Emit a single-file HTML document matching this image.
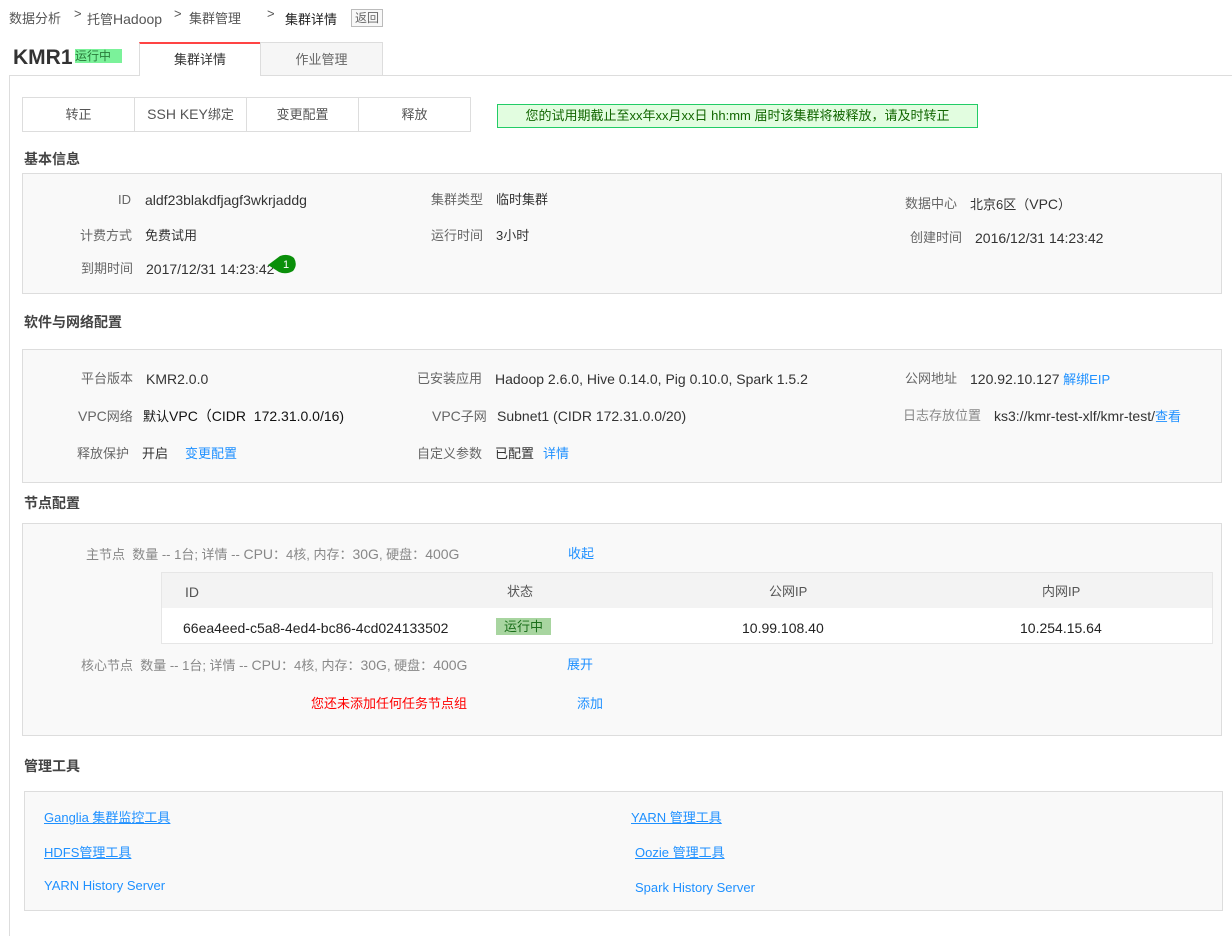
<!DOCTYPE html>
<html><head><meta charset="utf-8"><style>
body{margin:0;width:1232px;height:921px;position:relative;background:#fff;font-family:"Liberation Sans","Noto Sans CJK SC",sans-serif;font-size:13px;color:#333;overflow:hidden}
.a{position:absolute;white-space:nowrap;line-height:16px}
.g{color:#666}.l{color:#666}.b{color:#1e90ff}
.n{font-size:14px}
.p{position:absolute;background:#f9f9f9;border:1px solid #ddd;box-sizing:border-box}
.h{position:absolute;font-size:14px;font-weight:bold;color:#444;line-height:16px}
.btn{position:absolute;top:97px;height:35px;border:1px solid #ddd;box-sizing:border-box;text-align:center;line-height:33px;color:#555;background:#fff}
u{text-decoration:underline}
</style></head><body>
<div class="a" style="left:9px;top:11px;color:#555">数据分析</div>
<div class="a" style="left:74px;top:6px;color:#555">&gt;</div>
<div class="a" style="left:87px;top:11px;color:#555">托管<span class="n">Hadoop</span></div>
<div class="a" style="left:174px;top:6px;color:#555">&gt;</div>
<div class="a" style="left:189px;top:11px;color:#555">集群管理</div>
<div class="a" style="left:267px;top:6px;color:#555">&gt;</div>
<div class="a" style="left:285px;top:12px;color:#222">集群详情</div>
<div class="a" style="left:351px;top:9px;border:1px solid #bbb;font-size:12px;padding:0 3px;color:#666;line-height:16px;background:#f8f8f8">返回</div>

<div class="a" style="left:13px;top:47px;font-size:21px;font-weight:bold;line-height:22px;color:#333">KMR1</div>
<div class="a" style="left:75px;top:49px;background:#7bf29a;width:47px;height:14px;line-height:14px;font-size:12px;color:#2a7a3a">运行中</div>

<div style="position:absolute;left:9px;top:75px;width:1230px;height:860px;border-left:1px solid #ddd;border-top:1px solid #ddd"></div>
<div style="position:absolute;left:139px;top:42px;width:122px;height:34px;background:#fff;border-top:2px solid #f44;border-left:1px solid #ddd;border-right:1px solid #ddd;box-sizing:border-box;text-align:center;line-height:32px;color:#333">集群详情</div>
<div style="position:absolute;left:260px;top:42px;width:123px;height:33px;background:#f6f6f6;border:1px solid #ddd;border-bottom:none;box-sizing:border-box;text-align:center;line-height:33px;color:#666">作业管理</div>

<div class="btn" style="left:22px;width:113px">转正</div>
<div class="btn" style="left:134px;width:113px"><span class="n">SSH KEY</span>绑定</div>
<div class="btn" style="left:246px;width:113px">变更配置</div>
<div class="btn" style="left:358px;width:113px">释放</div>
<div class="a" style="left:497px;top:104px;width:481px;height:24px;box-sizing:border-box;border:1px solid #2c6;background:#e2fde0;color:#160;text-align:center;line-height:22px">您的试用期截止至xx年xx月xx日 hh:mm 届时该集群将被释放，请及时转正</div>

<div class="h" style="left:24px;top:151px">基本信息</div>
<div class="p" style="left:22px;top:173px;width:1200px;height:121px"></div>
<div class="a l" style="left:118px;top:192px">ID</div><div class="a n" style="left:145px;top:192px">aldf23blakdfjagf3wkrjaddg</div>
<div class="a l" style="left:431px;top:192px">集群类型</div><div class="a" style="left:496px;top:192px">临时集群</div>
<div class="a l" style="left:905px;top:196px">数据中心</div><div class="a" style="left:970px;top:196px">北京6区（<span class="n">VPC</span>）</div>
<div class="a l" style="left:80px;top:228px">计费方式</div><div class="a" style="left:145px;top:228px">免费试用</div>
<div class="a l" style="left:431px;top:228px">运行时间</div><div class="a" style="left:496px;top:228px">3小时</div>
<div class="a l" style="left:910px;top:230px">创建时间</div><div class="a n" style="left:975px;top:230px">2016/12/31 14:23:42</div>
<div class="a l" style="left:81px;top:261px">到期时间</div><div class="a n" style="left:146px;top:261px">2017/12/31 14:23:42</div>
<svg style="position:absolute;left:266px;top:253px" width="32" height="22"><path d="M2 12 L14 3 Q22 0 28 5 Q32 12 27 18 Q20 22 13 19 Z" fill="#0a8f0a"/><text x="20" y="15" font-size="11" fill="#fff" text-anchor="middle" font-family="Liberation Sans">1</text></svg>

<div class="h" style="left:24px;top:314px">软件与网络配置</div>
<div class="p" style="left:22px;top:349px;width:1200px;height:134px"></div>
<div class="a l" style="left:81px;top:371px">平台版本</div><div class="a n" style="left:146px;top:371px">KMR2.0.0</div>
<div class="a l" style="left:417px;top:371px">已安装应用</div><div class="a n" style="left:495px;top:371px">Hadoop 2.6.0, Hive 0.14.0, Pig 0.10.0, Spark 1.5.2</div>
<div class="a l" style="left:905px;top:371px">公网地址</div><div class="a" style="left:970px;top:371px"><span class="n">120.92.10.127</span> <span class="b">解绑EIP</span></div>
<div class="a l" style="left:78px;top:408px"><span class="n">VPC</span>网络</div><div class="a" style="left:143px;top:408px;color:#111">默认<span class="n">VPC（CIDR &nbsp;172.31.0.0/16)</span></div>
<div class="a l" style="left:432px;top:408px"><span class="n">VPC</span>子网</div><div class="a n" style="left:497px;top:408px">Subnet1 (CIDR 172.31.0.0/20)</div>
<div class="a" style="left:903px;top:408px;color:#888">日志存放位置</div><div class="a" style="left:994px;top:408px"><span class="n">ks3://kmr-test-xlf/kmr-test/</span><span class="b">查看</span></div>
<div class="a l" style="left:77px;top:446px">释放保护</div><div class="a" style="left:142px;top:446px">开启</div><div class="a b" style="left:185px;top:446px">变更配置</div>
<div class="a l" style="left:417px;top:446px">自定义参数</div><div class="a" style="left:495px;top:446px">已配置</div><div class="a b" style="left:543px;top:446px">详情</div>

<div class="h" style="left:24px;top:495px">节点配置</div>
<div class="p" style="left:22px;top:523px;width:1200px;height:213px"></div>
<div class="a" style="left:86px;top:546px;color:#888">主节点 &nbsp;数量 -- 1台; 详情 -- <span class="n">CPU</span>：4核, 内存：<span class="n">30G</span>, 硬盘：<span class="n">400G</span></div>
<div class="a b" style="left:568px;top:546px">收起</div>
<div style="position:absolute;left:161px;top:572px;width:1052px;height:72px;border:1px solid #e6e6e6;box-sizing:border-box;background:#fff"></div>
<div style="position:absolute;left:162px;top:573px;width:1050px;height:35px;background:#f3f3f3"></div>
<div class="a n" style="left:185px;top:584px;color:#555">ID</div>
<div class="a" style="left:507px;top:584px;color:#555">状态</div>
<div class="a" style="left:769px;top:584px;color:#555">公网IP</div>
<div class="a" style="left:1042px;top:584px;color:#555">内网IP</div>
<div class="a n" style="left:183px;top:620px;color:#222">66ea4eed-c5a8-4ed4-bc86-4cd024133502</div>
<div class="a" style="left:496px;top:618px;width:55px;height:17px;background:#a8d5a0;color:#1a6e1a;text-align:center;line-height:17px">运行中</div>
<div class="a n" style="left:742px;top:620px;color:#222">10.99.108.40</div>
<div class="a n" style="left:1020px;top:620px;color:#222">10.254.15.64</div>
<div class="a" style="left:81px;top:657px;color:#888">核心节点 &nbsp;数量 -- 1台; 详情 -- <span class="n">CPU</span>：4核, 内存：<span class="n">30G</span>, 硬盘：<span class="n">400G</span></div>
<div class="a b" style="left:567px;top:657px">展开</div>
<div class="a" style="left:311px;top:696px;color:#f00">您还未添加任何任务节点组</div>
<div class="a b" style="left:577px;top:696px">添加</div>

<div class="h" style="left:24px;top:758px">管理工具</div>
<div class="p" style="left:24px;top:791px;width:1199px;height:120px"></div>
<div class="a b" style="left:44px;top:810px"><u>Ganglia 集群监控工具</u></div>
<div class="a b" style="left:631px;top:810px"><u>YARN 管理工具</u></div>
<div class="a b" style="left:44px;top:845px"><u>HDFS管理工具</u></div>
<div class="a b" style="left:635px;top:845px"><u>Oozie 管理工具</u></div>
<div class="a b" style="left:44px;top:878px">YARN History Server</div>
<div class="a b" style="left:635px;top:880px">Spark History Server</div>
</body></html>
